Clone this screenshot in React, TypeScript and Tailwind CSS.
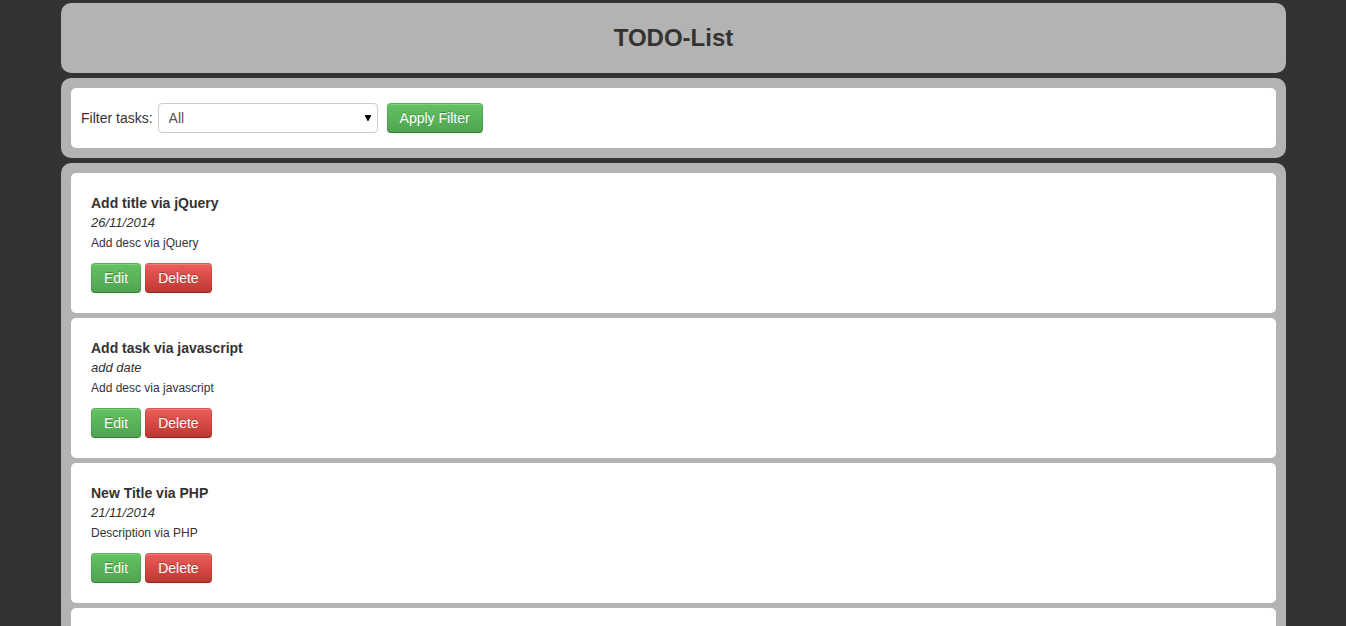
import { useState } from 'react';
import type { ReactNode } from 'react';

type Task = { title: string; date: string; description: string };

const tasks: Task[] = [
  { title: 'Add title via jQuery', date: '26/11/2014', description: 'Add desc via jQuery' },
  { title: 'Add task via javascript', date: 'add date', description: 'Add desc via javascript' },
  { title: 'New Title via PHP', date: '21/11/2014', description: 'Description via PHP' },
];

const tones = {
  success: 'from-[#62c462] to-[#51a351]',
  danger: 'from-[#ee5f5b] to-[#bd362f]',
};

function Button({ tone, children }: { tone: keyof typeof tones; children: ReactNode }) {
  return (
    <button
      type="button"
      className={`h-[30px] cursor-pointer rounded-sm border border-black/10 border-b-black/25 bg-linear-to-b bg-origin-border px-3 text-sm leading-5 text-white shadow-[inset_0_1px_0_rgba(255,255,255,0.2),0_1px_2px_rgba(0,0,0,0.05)] [text-shadow:0_-1px_0_rgba(0,0,0,0.25)] ${tones[tone]}`}
    >
      {children}
    </button>
  );
}

function TaskCard({ task }: { task: Task }) {
  return (
    <li className="rounded-[5px] bg-white p-5">
      <h2 className="text-sm leading-5 font-bold">{task.title}</h2>
      <p className="text-[13px] leading-5 italic">{task.date}</p>
      <p className="text-xs leading-5">{task.description}</p>
      <div className="mt-[10px] flex gap-1">
        <Button tone="success">Edit</Button>
        <Button tone="danger">Delete</Button>
      </div>
    </li>
  );
}

export default function App() {
  const [filter, setFilter] = useState('All');

  return (
    <div className="h-screen overflow-hidden bg-[#333333] font-['Liberation_Sans',Arial,sans-serif] text-sm leading-5 text-[#333333]">
      <main className="flex flex-col gap-[5px] pt-[3px] pr-[60px] pl-[61px]">
        <header className="rounded-[10px] bg-[#b3b3b3] px-5 py-[15px] text-center">
          <h1 className="text-2xl leading-10 font-bold">TODO-List</h1>
        </header>

        <section className="rounded-[10px] bg-[#b3b3b3] p-[10px]">
          <form
            className="flex items-center rounded-[5px] bg-white px-[10px] py-[15px]"
            onSubmit={(event) => event.preventDefault()}
          >
            <label htmlFor="filter" className="mr-[5px]">
              Filter tasks:
            </label>
            <div className="relative mr-[9px] w-[220px]">
              <select
                id="filter"
                value={filter}
                onChange={(event) => setFilter(event.target.value)}
                className="block h-[30px] w-full appearance-none rounded-sm border border-[#cccccc] bg-white px-[10px] text-sm text-[#555555]"
              >
                <option>All</option>
              </select>
              <svg
                aria-hidden="true"
                viewBox="0 0 6 6"
                className="pointer-events-none absolute top-3 right-[7px] size-[6px]"
              >
                <path d="M0 0h6v1L3.4 6h-.8L0 1z" fill="#000000" />
              </svg>
            </div>
            <Button tone="success">Apply Filter</Button>
          </form>
        </section>

        <section className="rounded-t-[10px] bg-[#b3b3b3] p-[10px]">
          <ul className="flex flex-col gap-[5px]">
            {tasks.map((task) => (
              <TaskCard key={task.title} task={task} />
            ))}
            <li className="min-h-[140px] rounded-[5px] bg-white p-5" />
          </ul>
        </section>
      </main>
    </div>
  );
}
